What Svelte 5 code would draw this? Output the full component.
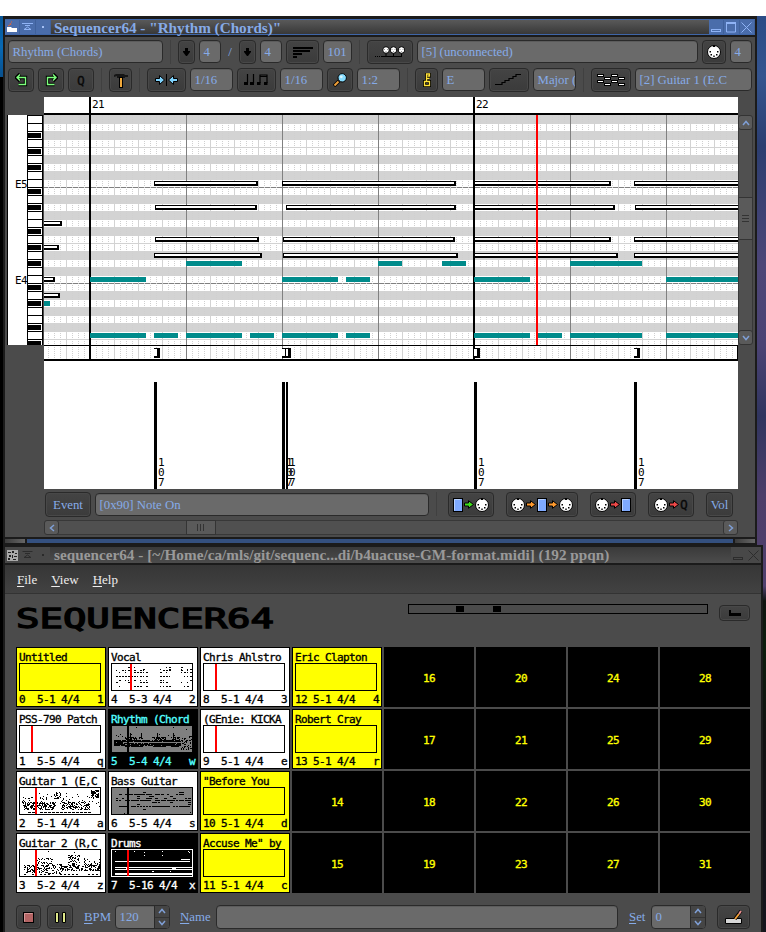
<script>
  const range = (n) => Array.from({ length: n }, (_, i) => i);

  // piano roll geometry
  const greyRows = [0, 2, 5, 7, 10, 12, 14, 17, 19, 22, 24, 26];
  const blackKeys = [2, 4, 6, 9, 11, 14, 16, 18, 21, 23, 26, 28];
  const dotted = range(116).map((i) => 48 + i * 6).filter((x) => (x - 90) % 24 !== 0 && x < 738);
  const subs = range(29).map((i) => 66 + i * 24).filter((x) => (x - 90) % 96 !== 0 && x < 738);
  const beats = [186, 282, 378, 570, 666];
  const notes = [
    [154, 258, 181], [282, 456, 181], [474, 611, 181], [634, 745, 181],
    [155, 257, 205], [286, 456, 205], [474, 615, 205], [635, 745, 205],
    [30, 62, 221],
    [155, 259, 237], [283, 455, 237], [474, 611, 237], [634, 745, 237],
    [30, 59, 245],
    [154, 262, 253], [283, 458, 253], [474, 618, 253], [634, 745, 253],
    [30, 55, 277], [30, 60, 293]
  ];
  const ghosts = [
    [186, 242, 261], [378, 402, 261], [442, 466, 261], [570, 642, 261],
    [90, 146, 277], [282, 338, 277], [346, 370, 277], [474, 530, 277], [666, 738, 277],
    [44, 50, 301],
    [90, 146, 333], [154, 178, 333], [186, 242, 333], [250, 274, 333], [282, 338, 333],
    [346, 370, 333], [474, 530, 333], [538, 562, 333], [570, 642, 333], [666, 738, 333]
  ];
  const events = [154, 282, 474, 634];

  // miniature pattern drawings
  function rng(seed) {
    return () => {
      seed = (seed * 1664525 + 1013904223) % 4294967296;
      return seed / 4294967296;
    };
  }
  const dot = (x, y, w = 1) => `M${x} ${y}h${w}v1h-${w}z`;
  function scatter(r, x0, x1, y0, y1, density) {
    let d = '';
    for (let y = y0; y < y1; y++)
      for (let x = x0; x < x1; x++) if (r() < density) d += dot(x, y);
    return d;
  }
  function vocal() {
    const r = rng(7);
    let d = '';
    for (const [a, b] of [[4, 36], [48, 60], [69, 80]])
      for (const [y, p] of [[3, 0.15], [5, 0.3], [6, 0.5], [8, 0.7], [12, 0.95], [16, 0.5], [18, 0.7], [22, 0.8]])
        for (let x = a; x < b; x += 3) if (r() < p) d += dot(x, y, r() < 0.4 ? 1 : 2);
    return d;
  }
  function rhythm() {
    const r = rng(21);
    let d = '';
    for (let x = 2; x < 69; x++) {
      const wave = (x > 12 && x < 31) || (x > 40 && x < 54) || (x > 58 && x < 68) ? 4 : 1;
      for (let y = 15 - wave; y < 19 + wave / 2; y++) if (r() < (y < 14 ? 0.6 : 0.9)) d += dot(x, y);
      if (r() < 0.2) d += dot(x, 8 + Math.floor(r() * 4));
    }
    for (const x of [18, 29, 45, 61]) d += `M${x} 7h1v6h-1z`;
    return d + scatter(r, 69, 80, 10, 24, 0.33) + dot(24, 1) + dot(61, 1) + dot(74, 3);
  }
  function bass() {
    const r = rng(77);
    let d = '';
    for (const [y, p] of [[4, 0.1], [6, 0.75], [8, 0.3], [10, 0.5], [12, 0.95], [14, 0.25], [16, 0.1], [18, 0.85], [21, 0.08]])
      for (let x = 4; x < 79; x += 3) if (r() < p) d += dot(x, y, r() < 0.5 ? 2 : 3);
    return d + dot(12, 25) + dot(78, 24);
  }
  function guitar1() {
    const r = rng(5);
    let d = scatter(r, 3, 36, 14, 22, 0.46) + scatter(r, 40, 70, 14, 22, 0.46);
    d += scatter(r, 33, 41, 4, 11, 0.45) + scatter(r, 71, 79, 2, 10, 0.6) + scatter(r, 2, 80, 8, 16, 0.08);
    for (let x = 4; x < 72; x += 4) if (r() < 0.75) d += dot(x, 24, 3);
    return d + dot(19, 5) + dot(27, 6) + dot(46, 5) + dot(57, 6) + dot(3, 9) + dot(79, 18);
  }
  function guitar2() {
    const r = rng(13);
    let d = scatter(r, 4, 28, 15, 23, 0.42) + scatter(r, 40, 80, 15, 21, 0.42) + scatter(r, 48, 60, 5, 17, 0.36);
    d += scatter(r, 17, 33, 8, 16, 0.22) + scatter(r, 64, 80, 8, 16, 0.25) + scatter(r, 28, 44, 14, 24, 0.3);
    for (let x = 4; x < 78; x += 4) if (r() < 0.5) d += dot(x, 24, 2);
    return d + dot(28, 1) + dot(54, 2);
  }
  function drums() {
    let d = dot(3, 11, 75) + dot(3, 17, 77) + dot(3, 19, 77) + dot(3, 23, 77) + dot(3, 24, 77);
    d += dot(69, 9, 9) + dot(40, 21, 2) + dot(58, 21) + dot(14, 18, 3) + dot(60, 18, 4);
    for (const [x, y] of [[3, 1], [22, 1], [32, 2], [32, 5], [50, 1], [50, 5], [76, 1], [77, 2]]) d += dot(x, y);
    return d;
  }

  const slots = [
    { title: 'Untitled', info: '0  5-1 4/4   1', look: 'yellow' },
    { title: 'PSS-790 Patch', info: '1  5-5 4/4   q', look: 'white', mark: 12 },
    { title: 'Guitar 1 (E,C', info: '2  5-1 4/4   a', look: 'white', mark: 16, art: guitar1() },
    { title: 'Guitar 2 (R,C', info: '3  5-2 4/4   z', look: 'white', mark: 16, art: guitar2() },
    { title: 'Vocal', info: '4  5-3 4/4   2', look: 'white', mark: 19, art: vocal() },
    { title: 'Rhythm (Chord', info: '5  5-4 4/4   w', look: 'cyan', mark: 16, art: rhythm(), grey: true },
    { title: 'Bass Guitar', info: '6  5-5 4/4   s', look: 'white', mark: 16, art: bass(), grey: true },
    { title: 'Drums', info: '7  5-16 4/4  x', look: 'black', mark: 16, art: drums() },
    { title: 'Chris Ahlstro', info: '8  5-1 4/4   3', look: 'white', mark: 12 },
    { title: '(GEnie: KICKA', info: '9  5-1 4/4   e', look: 'white', mark: 12 },
    { title: '"Before You', info: '10 5-1 4/4   d', look: 'yellow' },
    { title: 'Accuse Me" by', info: '11 5-1 4/4   c', look: 'yellow' },
    { title: 'Eric Clapton', info: '12 5-1 4/4   4', look: 'yellow' },
    { title: 'Robert Cray', info: '13 5-1 4/4   r', look: 'yellow' },
    ...range(18).map((i) => ({ empty: i + 14 }))
  ];
</script>

{#snippet down()}
  <svg width="7" height="8" viewBox="0 0 7 8"><path d="M2 0h3v3h2v1L4 8H3L0 4V3h2z" /></svg>
{/snippet}

{#snippet din()}
  <svg width="14" height="14" viewBox="0 0 14 14">
    <circle cx="7" cy="7" r="6.500" fill="#fff" stroke="#000" />
    <path d="M6 .5h2v1.500H6zM2.500 6h1.500v1.500H2.500zM10 6h1.500v1.500H10zM3.500 9H5v1.500H3.500zM9 9h1.500v1.500H9zM6.300 10.500h1.400V12H6.300z" />
  </svg>
{/snippet}

{#snippet box()}
  <svg width="10" height="14" viewBox="0 0 10 14"><rect x=".5" y=".5" width="9" height="13" fill="#7faaff" stroke="#000" /><path d="M1.500 12.500V1.500h6" fill="none" stroke="#b9d2ff" /></svg>
{/snippet}

{#snippet arrow(color)}
  <svg width="10" height="9" viewBox="0 0 10 9"><path d="M.5 3h4V.7L9.500 4.500 4.500 8.300V6h-4z" fill={color} stroke="#000" /></svg>
{/snippet}

{#snippet turn()}
  <path d="M1.500 4.500h9v7H3.500M5 1 1.500 4.500 5 8" fill="none" stroke="#000" stroke-width="3.400" />
  <path d="M1.500 4.500h9v7H3.500M5 1.500 2 4.500 5 7.500" fill="none" stroke="#7dff7d" stroke-width="1.400" />
{/snippet}

{#snippet chevron(rot)}
  <svg width="8" height="8" viewBox="-4 -4 8 8"><path d="M-3 2 0-1.500 3 2" transform="rotate({rot})" fill="none" stroke="#7f9fd6" stroke-width="1.500" /></svg>
{/snippet}

<div class="desktop">
  <div class="win editor">
    <div class="title active">
      <span class="tb"><svg width="12" height="12" viewBox="0 0 12 12"><path d="M1 6h4l1 1h5v4H1z" fill="#fff" /><path d="M2 5l2-1M4 2l1 2M5 1h1" stroke="#e8642c" /></svg></span>
      <span class="tb"><svg width="11" height="10" viewBox="0 0 11 10"><path d="M0 1.500h11M3 3.500h5M2 7.500h7L5.500 5z" fill="none" stroke="#8fb3f5" /></svg></span>
      <span class="tb"><i class="pin"></i></span>
      <span class="caption">Sequencer64 - "Rhythm (Chords)"</span>
      <span class="tb"><svg width="11" height="11" viewBox="0 0 11 11"><rect x=".5" y="7.500" width="9" height="2" fill="none" stroke="#8fb3f5" /></svg></span>
      <span class="tb"><svg width="11" height="11" viewBox="0 0 11 11"><path d="M.5 1h9v9h-9z" fill="none" stroke="#8fb3f5" /><path d="M0 1h10" stroke="#8fb3f5" stroke-width="2" /></svg></span>
      <span class="tb"><svg width="11" height="11" viewBox="0 0 11 11"><path d="M.5.5l10 10M10.500.5l-10 10" stroke="#8fb3f5" /></svg></span>
    </div>

    <div class="bar one">
      <span class="entry w155">Rhythm (Chords)</span>
      <i class="sep"></i>
      <span class="btn w17">{@render down()}</span>
      <span class="entry w22">4</span>
      <span class="slash">/</span>
      <span class="btn w17">{@render down()}</span>
      <span class="entry w22">4</span>
      <span class="btn w33"><svg width="20" height="11" viewBox="0 0 20 11"><path d="M0 0h20v2H0zM0 3h17v2H0zM0 6h9v2H0zM0 9h4v2H0z" /></svg></span>
      <span class="entry w29">101</span>
      <i class="sep"></i>
      <span class="btn w46">
        <svg width="30" height="13" viewBox="0 0 30 13">
          <path d="M0 10.500h1M2 10.500h1M4 10.500h1M6 10.500h21M11 7v4M18.500 7v4M26.500 7v4" stroke="#000" />
          {#each [11, 18.5, 26.5] as cx}<circle {cx} cy="4" r="3.300" fill="#fff" stroke="#000" /><path d="M{cx - 2} 3.500h1M{cx + 1} 3.500h1M{cx - .5} 5.500h1" stroke="#999" />{/each}
        </svg>
      </span>
      <span class="entry w281">[5] (unconnected)</span>
      <span class="btn w24">{@render din()}</span>
      <span class="entry w22">4</span>
    </div>

    <div class="bar two">
      <span class="btn w26"><svg width="13" height="14" viewBox="0 0 13 14">{@render turn()}</svg></span>
      <span class="btn w26"><svg class="flip" width="13" height="14" viewBox="0 0 13 14">{@render turn()}</svg></span>
      <span class="btn w26"><span class="q">Q</span></span>
      <i class="sep"></i>
      <span class="btn w23"><svg width="14" height="15" viewBox="0 0 14 15"><path d="M0 4V2l2-1h8l1 1h3v2h-3v1H3V3z" fill="#161616" /><path d="M5 4h4v11H5z" /><path d="M7 5v9" stroke="#f0a83a" stroke-width="2" /></svg></span>
      <i class="sep"></i>
      <span class="btn w39">
        <svg width="23" height="12" viewBox="0 0 23 12"><path d="M.5 4.500h4v-3l5 4.500-5 4.500v-3h-4zM22.500 4.500h-4v-3l-5 4.500 5 4.500v-3h4z" fill="#7fd4ff" stroke="#000" /><path d="M11.500 0v12" stroke="#000" /></svg>
      </span>
      <span class="entry w43">1/16</span>
      <span class="btn w39">
        <svg width="25" height="12" viewBox="0 0 25 12"><path d="M3.500 0v9M9.500 0v9M16 9V1h7v8M16 2.500h7" fill="none" stroke="#000" stroke-width="1.200" /><path d="M0 8h4v3H0zM6 8h4v3H6zM13 8h3.500v3H13zM20 8h3.500v3H20z" /></svg>
      </span>
      <span class="entry w43">1/16</span>
      <span class="btn w26">
        <svg width="14" height="14" viewBox="0 0 14 14"><path d="M6 8l-5 5" stroke="#000" stroke-width="3.500" /><path d="M5.500 8.500l-4 4" stroke="#f0a03a" stroke-width="2" /><circle cx="9.200" cy="4.800" r="4.200" fill="#86dcff" stroke="#000" /><circle cx="8.300" cy="3.800" r="1.400" fill="#d8f5ff" /></svg>
      </span>
      <span class="entry w43">1:2</span>
      <i class="sep"></i>
      <span class="btn w23">
        <svg width="8" height="14" viewBox="0 0 8 14"><path d="M3.500 8V1h3v2h-2M4.500 5.500h2M1.500 8.500h5v4h-5z" fill="none" stroke="#000" stroke-width="3" /><path d="M3.500 8V1h3v2h-2M3.500 5.500h3M1.500 8.500h5v4h-5z" fill="none" stroke="#ffe23a" stroke-width="1.300" /></svg>
      </span>
      <span class="entry w43">E</span>
      <span class="btn w40">
        <svg width="28" height="12" viewBox="0 0 28 12"><path d="M0 10.500h7v-2h3v-2h4v-2h4v-2h3v-2h5" fill="none" stroke="#000" stroke-width="1.200" /></svg>
      </span>
      <span class="entry w43">Major (</span>
      <i class="sep"></i>
      <span class="btn w40">
        <svg width="28" height="12" viewBox="0 0 28 12" shape-rendering="crispEdges">
          {#each [[0, 0], [14, 0], [7, 3], [21, 3], [0, 6], [14, 6], [7, 9], [21, 9]] as [x, y]}
            <rect {x} {y} width="7" height="3" /><rect x={x + 1} y={y + 1} width="5" height="1" fill="#fff" />
          {/each}
        </svg>
      </span>
      <span class="entry w117">[2] Guitar 1 (E.C</span>
    </div>

    <div class="work">
      <svg class="piano" width="37" height="230" viewBox="7 115 37 230" shape-rendering="crispEdges">
        <rect x="7" y="115" width="36" height="230" />
        <rect x="8" y="115" width="19" height="230" fill="#fff" />
        {#each range(29) as k}<rect x="28" y={116 + k * 8} width="14" height="7" fill="#fff" />{/each}
        {#each blackKeys as k}<rect x="28" y={117 + k * 8} width="13" height="5" />{/each}
        <text x="15" y="188">E5</text>
        <text x="15" y="284">E4</text>
      </svg>
      <svg class="roll" width="694" height="392" viewBox="44 97 694 392" shape-rendering="crispEdges">
        <rect x="44" y="97" width="694" height="392" fill="#fff" />
        {#each range(28) as k}<rect x="44" y={123 + k * 8} width="694" height="1" fill="#d3d3d3" />{/each}
        {#each greyRows as k}<rect x="44" y={115 + k * 8} width="694" height="9" fill="#d3d3d3" />{/each}
        <path d="M44 187.500h694M44 283.500h694" stroke="#808080" />
        {#each dotted as x}<path d="M{x + .5} 115v244" stroke="#d0d0d0" stroke-dasharray="1 1" />{/each}
        {#each subs as x}<rect {x} y="115" width="1" height="244" fill="#d3d3d3" />{/each}
        {#each beats as x}<rect {x} y="115" width="1" height="244" fill="#808080" />{/each}
        <rect x="89" y="97" width="2" height="262" />
        <rect x="473" y="97" width="2" height="262" />
        {#each notes as [a, b, y]}
          <rect x={a} {y} width={b - a} height="5" />
          <rect x={a + 1} y={y + 1} width={b - a - 3} height="2" fill="#fff" />
        {/each}
        {#each ghosts as [a, b, y]}<rect x={a} {y} width={b - a} height="5" fill="#008b8b" />{/each}
        <rect x="536" y="115" width="2" height="230" fill="#f00" />
        <rect x="44" y="113" width="694" height="2" />
        <rect x="44" y="345" width="694" height="1" />
        <rect x="44" y="359" width="694" height="2" />
        <rect x="737" y="345" width="1" height="15" />
        <rect x="285" y="348" width="6" height="10" />
        {#each events as x}
          <rect {x} y="348" width="6" height="10" />
          <rect {x} y="349" width="3" height="7" fill="#fff" />
          <rect {x} y="382" width="3" height="107" />
          <text x={x + 4} y="466">1</text>
          <text x={x + 4} y="476">0</text>
          <text x={x + 4} y="486">7</text>
        {/each}
        <rect x="286" y="349" width="2" height="7" fill="#fff" />
        <rect x="286" y="382" width="2" height="107" />
        <text x="289" y="466">1</text>
        <text x="289" y="476">0</text>
        <text x="289" y="486">7</text>
        <text x="92" y="108">21</text>
        <text x="476" y="108">22</text>
      </svg>
      <div class="vscroll">
        <span class="cap">{@render chevron(0)}</span>
        <span class="thumb"><svg width="7" height="8" viewBox="0 0 7 8"><path d="M0 .5h7M0 3.500h7M0 6.500h7" stroke="#333" /></svg></span>
        <span class="cap">{@render chevron(180)}</span>
      </div>
    </div>

    <div class="lower">
      <span class="btn w46">Event</span>
      <span class="entry w334">[0x90] Note On</span>
      <i class="sep"></i>
      <span class="btn w46 first">{@render box()}{@render arrow('#3fe01c')}{@render din()}</span>
      <span class="btn w72">{@render din()}{@render arrow('#ff9a2e')}{@render box()}{@render arrow('#ff9a2e')}{@render din()}</span>
      <span class="btn w46">{@render din()}{@render arrow('#f04848')}{@render box()}</span>
      <span class="btn w46">{@render din()}{@render arrow('#f04848')}<span class="q">Q</span></span>
      <span class="btn w27">Vol</span>
    </div>
    <div class="hscroll">
      <span class="cap">{@render chevron(-90)}</span>
      <span class="thumb"><svg width="8" height="7" viewBox="0 0 8 7"><path d="M.5 0v7M3.500 0v7M6.500 0v7" stroke="#333" /></svg></span>
      <span class="cap">{@render chevron(90)}</span>
    </div>
    <div class="resize"><i class="grip"></i><i class="edge"></i><i class="grip"></i></div>
  </div>

  <div class="win main">
    <div class="title">
      <span class="tb"><svg width="11" height="11" viewBox="0 0 11 11" shape-rendering="crispEdges"><rect width="11" height="11" fill="#aaa" /><path d="M1 2h3v1H1zM5 1h2v2H5zM8 3h2v1H8zM2 5h2v2H2zM5 5h1v3H5zM7 6h3v1H7zM1 8h2v2H1zM6 9h3v1H6z" fill="#222" /></svg></span>
      <span class="tb"><svg width="11" height="10" viewBox="0 0 11 10"><path d="M.5 1.500h10M3 3.500h5M2 7.500h7L5.500 5z" fill="none" stroke="#2c2c2c" /></svg></span>
      <span class="tb"><i class="pin"></i></span>
      <span class="caption">sequencer64 - [~/Home/ca/mls/git/sequenc...di/b4uacuse-GM-format.midi] (192 ppqn)</span>
      <span class="tb"><svg width="11" height="11" viewBox="0 0 11 11"><rect x=".5" y="7.500" width="9" height="2" fill="none" stroke="#2c2c2c" /></svg></span>
      <span class="tb"><svg width="11" height="11" viewBox="0 0 11 11"><path d="M.5.5l10 10M10.500.5l-10 10" stroke="#2c2c2c" /></svg></span>
    </div>
    <div class="menu">
      <span><u>F</u>ile</span><span><u>V</u>iew</span><span><u>H</u>elp</span>
    </div>
    <div class="head">
      <svg class="logo" width="260" height="30" viewBox="0 0 260 30"><text x="0" y="21" textLength="258" lengthAdjust="spacingAndGlyphs">SEQUENCER64</text></svg>
      <div class="pulse"><i></i><i></i></div>
      <span class="btn tiny"><svg width="12" height="6" viewBox="0 0 12 6"><path d="M0 0h2v3h10v3H0z" /></svg></span>
    </div>
    <div class="slots">
      {#each slots as s}
        {#if s.empty}
          <div class="slot empty">{s.empty}</div>
        {:else}
          <div class="slot {s.look}">
            <pre>{s.title}</pre>
            <svg width="82" height="28" viewBox="0 0 82 28" shape-rendering="crispEdges">
              <rect x=".5" y=".5" width="81" height="27" fill={s.grey ? '#808080' : 'none'} stroke={s.look === 'black' ? '#fff' : '#000'} />
              {#if s.art}<path d={s.art} transform="translate(1 1)" fill={s.look === 'black' ? '#fff' : '#000'} />{/if}
              {#if s.look === 'cyan'}<rect x="12" y="17" width="58" height="1" fill="#808080" />{/if}
              {#if s.mark}<rect x={s.mark} y="1" width="2" height="26" fill={s.grey ? '#000' : '#f00'} />{/if}
            </svg>
            <pre>{s.info}</pre>
          </div>
        {/if}
      {/each}
    </div>
    <div class="foot">
      <span class="btn w25"><svg width="11" height="11" viewBox="0 0 11 11"><rect x=".5" y=".5" width="10" height="10" fill="#b46464" stroke="#000" /><path d="M1.500 9.500v-8h8" fill="none" stroke="#d79a9a" /></svg></span>
      <span class="btn w26 gap6"><svg width="11" height="11" viewBox="0 0 11 11"><path d="M.5.5h3v10h-3zM7.500.5h3v10h-3z" fill="#dfe88a" stroke="#000" /></svg></span>
      <span class="lab bpm"><u>B</u>PM</span>
      <span class="entry spin w55">120<span class="steps"><b>{@render chevron(0)}</b><b>{@render chevron(180)}</b></span></span>
      <span class="lab name"><u>N</u>ame</span>
      <span class="entry grow"></span>
      <span class="lab set"><u>S</u>et</span>
      <span class="entry spin w55">0<span class="steps"><b>{@render chevron(0)}</b><b>{@render chevron(180)}</b></span></span>
      <span class="btn w33 edit"><svg width="18" height="14" viewBox="0 0 18 14"><path d="M.5 8.500h16v5H.5z" fill="#d8d8d8" stroke="#000" /><path d="M16 1 10 9" stroke="#000" stroke-width="3.500" /><path d="M16 1l-2 3" stroke="#e89090" stroke-width="2" /><path d="M14 4l-4 5" stroke="#f0a03a" stroke-width="2" /></svg></span>
    </div>
  </div>
</div>

<style>
  :global(body) { margin: 0; background: #fff; }
  .desktop {
    box-sizing: border-box;
    width: 766px;
    height: 932px;
    overflow: hidden;
    padding: 16px 0 0 3px;
    background:
      linear-gradient(#fff, #fff) 0 0 / 766px 16px no-repeat,
      linear-gradient(#0a5696, #0869b4 50%, #08508e) 0 16px / 3px 61px no-repeat,
      linear-gradient(#000, #000) 0 77px / 3px 855px no-repeat,
      linear-gradient(#2b4c86, #35558f 60px, #2c3e70 130px, #4d4677 250px, #4b4374 330px, #30355f 400px, #4d3e69 480px, #51406e 570px, #101410 585px, #0d1d0d 630px, #111 720px, #15151d) 0 16px / 766px 916px no-repeat;
    font: 12.800px/20px "Liberation Serif", serif;
    color: #86abe8;
  }
  svg { display: block; flex: none; }
  .win { box-sizing: border-box; background: #4b4b4b; border: solid #1b1b1b; border-width: 3px 2px 0; }
  .editor { width: 754px; height: 529px; }
  .main { width: 760px; height: 387px; border-top-width: 2px; position: relative; }

  .title {
    display: flex; box-sizing: border-box; height: 16px;
    background: linear-gradient(#3a3a3a, #4c4c4c);
    font-size: 15.200px; font-weight: bold; line-height: 16px; color: #999; letter-spacing: .03px;
  }
  .title.active { border: solid #3f66a8; border-width: 1px 0; color: #86abe8; background: linear-gradient(#595959, #383838); line-height: 15px; letter-spacing: 0; }
  .tb { width: 15px; display: flex; align-items: center; justify-content: center; background: #484848; }
  .active .tb { background: #4a6dab; border-right: 1px solid #3f619c; box-sizing: border-box; width: 15.300px; }
  .pin { width: 2px; height: 2px; background: #2a2a2a; }
  .active .pin { background: #a5c0f5; }
  .caption { flex: 1; padding-left: 4px; white-space: nowrap; }
  .active .caption { padding-left: 3px; }

  .bar { display: flex; gap: 4px; padding-left: 3px; }
  .bar.one { margin-top: 5px; border-top: 0; }
  .editor > .title { box-shadow: 0 2px #1b1b1b; }
  .bar.two { margin-top: 4px; }
  .bar > *, .lower > *, .foot > * { flex: none; }
  .btn, .entry {
    box-sizing: border-box; height: 24px; border: 1px solid #2a2a2a; border-radius: 4px;
    display: flex; align-items: center; white-space: nowrap;
  }
  .bar .entry, .lower .entry { height: 23px; }
  .btn { justify-content: center; background: linear-gradient(#444, #3b3b3b); box-shadow: inset 0 0 0 1px #484848; }
  .entry { background: #6a6a6a; padding-left: 3.500px; overflow: hidden; box-shadow: inset 0 1px #5c5c5c; }
  .sep { width: 7px; height: 24px; background: linear-gradient(#404040, #404040) 3px 0 / 1px 24px no-repeat; }
  .slash { width: 10px; text-align: center; line-height: 24px; }
  .q { font: 13px "DejaVu Sans Mono", monospace; color: #080808; -webkit-text-stroke: .3px #080808; }
  .flip { transform: scaleX(-1); }
  .w17 { width: 17px; } .w22 { width: 22px; } .w23 { width: 23px; } .w24 { width: 24px; } .w25 { width: 25px; }
  .w26 { width: 26px; } .w27 { width: 27px; } .w29 { width: 29px; } .w33 { width: 33px; } .w39 { width: 39px; }
  .w40 { width: 40px; } .w43 { width: 43px; } .w46 { width: 46px; } .w55 { width: 55px; } .w72 { width: 72px; }
  .w117 { width: 117px; } .w155 { width: 155px; } .w281 { width: 281px; } .w334 { width: 334px; }

  .work { display: flex; margin: 5px 0 0 2px; }
  .piano { margin-top: 18px; }
  .piano text, .roll text, .slot {
    font: 11px/12px "DejaVu Sans Mono", monospace; letter-spacing: -.62px; -webkit-text-stroke: .35px currentColor;
  }
  .piano text, .roll text { color: #000; fill: #000; }
  .vscroll {
    box-sizing: border-box; width: 15px; height: 230px; margin-top: 18px; border: 1px solid #383838; border-radius: 4px;
    display: flex; flex-direction: column; background: #505050;
  }
  .cap, .thumb { box-sizing: border-box; display: flex; align-items: center; justify-content: center; background: #5a5a5a; border: 1px solid #343434; }
  .cap { width: 15px; height: 15px; border-radius: 3px; }
  .vscroll .cap, .vscroll .thumb { margin-left: -1px; width: 15px; }
  .vscroll .cap:first-child { margin-top: -1px; }
  .vscroll .cap:last-child { margin: auto 0 -1px -1px; }
  .vscroll .thumb { height: 43px; margin-top: 67px; }

  .lower { display: flex; gap: 4px; margin: 3px 0 0 40px; }
  .lower .btn { height: 25px; gap: 1px; }
  .lower .entry { margin-top: 1px; }
  .lower .first { margin-left: 4px; }
  .lower .first ~ .btn { margin-left: 8px; }
  .hscroll {
    box-sizing: border-box; width: 694px; height: 15px; margin: 3px 0 0 39px; border: 1px solid #383838; border-radius: 4px;
    display: flex; background: #505050;
  }
  .hscroll .cap, .hscroll .thumb { margin-top: -1px; height: 15px; }
  .hscroll .cap:first-child { margin-left: -1px; }
  .hscroll .cap:last-child { margin: -1px -1px 0 auto; }
  .hscroll .thumb { width: 30px; margin-left: 127px; }
  .resize { display: flex; gap: 2px; margin-top: 2px; padding: 2px 0; background: #1b1b1b; height: 4px; }
  .grip { width: 20px; background: linear-gradient(90deg, #3c3c3c, #666); }
  .edge { flex: 1; background: #34507f; }

  .menu {
    display: flex; gap: 14px; box-sizing: border-box; height: 31px; padding-left: 12px; border-top: 2px solid #1b1b1b;
    border-bottom: 1px solid #333; background: linear-gradient(#363636, #424242); color: #eee; line-height: 30px; font-size: 13px;
  }
  u { text-underline-offset: 2px; text-decoration-thickness: 1px; }
  .head { display: flex; height: 53px; padding: 10px 0 0 11px; box-sizing: border-box; }
  .logo { margin-top: 3px; }
  .logo text { font: 26px "DejaVu Sans Mono", monospace; fill: #000; stroke: #000; stroke-width: 1.300px; stroke-linejoin: miter; }
  .pulse { box-sizing: border-box; width: 300px; height: 10px; border: 1px solid #000; margin: 0 0 0 132px; display: flex; padding: 1px 0 1px 47px; gap: 29px; }
  .pulse i { width: 8px; background: #000; }
  .tiny { width: 31px; height: 16px; margin: 1px 0 0 11px; }

  .slots {
    display: grid; grid-template-rows: repeat(4, 60px); grid-auto-flow: column; grid-auto-columns: 90px; gap: 2px;
    margin-left: 11px;
  }
  .slot { box-sizing: border-box; border: 1px solid #000; padding: 4px 0 0 2px; color: #000; }
  .slot pre { margin: 0; font: inherit; height: 11px; }
  .slot svg + pre { margin-top: 3px; }
  .yellow { background: #ff0; }
  .white { background: #fff; }
  .black { background: #000; color: #fff; }
  .cyan { background: #000; color: #5ff; }
  .empty { background: #000; color: #ff0; display: flex; align-items: center; justify-content: center; padding: 4px 0 0; }

  .foot { display: flex; padding: 12px 11px 0; }
  .gap6 { margin-left: 6px; }
  .lab { line-height: 24px; }
  .foot .bpm { width: 31px; margin-left: 11px; }
  .foot .name { width: 36px; margin-left: 10px; }
  .foot .set { width: 22px; margin-left: 11px; }
  .foot .grow { width: 402px; }
  .spin { justify-content: space-between; }
  .steps { width: 15px; height: 22px; background: #454545; border-left: 1px solid #2a2a2a; display: flex; flex-direction: column; box-sizing: border-box; }
  .steps b { flex: 1; display: flex; align-items: center; justify-content: center; }
  .steps b + b { border-top: 1px solid #333; }
  .foot .edit { margin-left: 11px; }
</style>
